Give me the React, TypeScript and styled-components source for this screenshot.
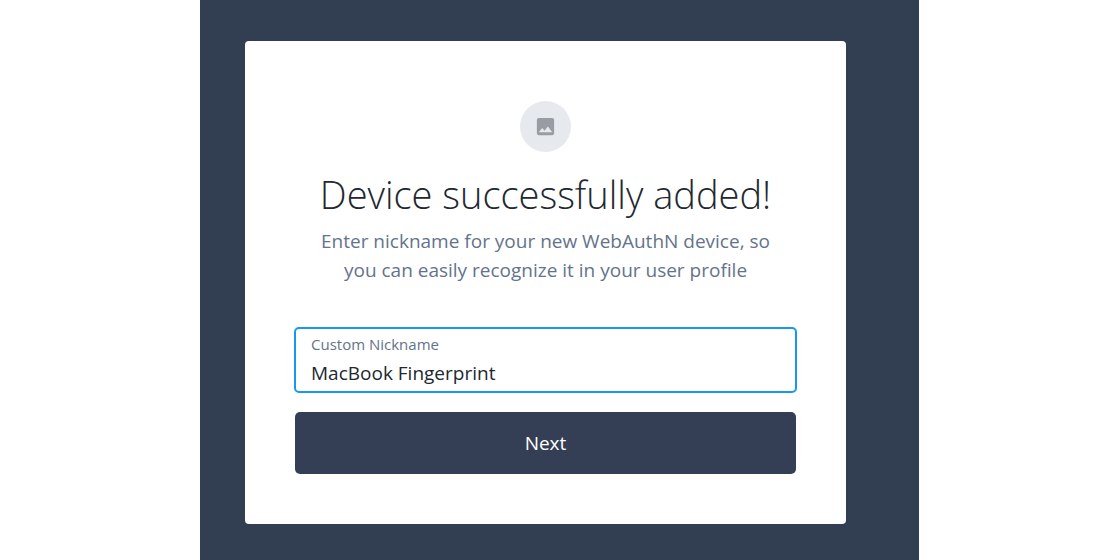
import React, { useState } from "react";
import styled, { createGlobalStyle } from "styled-components";

const GlobalStyle = createGlobalStyle`
  *, *::before, *::after { box-sizing: border-box; }
  body {
    margin: 0;
    background: #ffffff;
    font-family: "Open Sans", "Noto Sans", sans-serif;
  }
`;

const Page = styled.div`
  display: flex;
  justify-content: center;
  min-height: 100vh;
  padding-right: 1px;
`;

const Backdrop = styled.main`
  display: flex;
  align-items: flex-start;
  width: 100%;
  max-width: 719px;
  padding: 41px 73px 36px 45px;
  background: #323e52;
`;

const Card = styled.form`
  display: flex;
  flex: 1;
  flex-direction: column;
  align-items: center;
  padding: 60px 50px 50px;
  border-radius: 4px;
  background: #ffffff;
`;

const Badge = styled.div`
  display: grid;
  place-items: center;
  width: 51px;
  height: 51px;
  border-radius: 50%;
  background: #e6eaef;
  color: #989ca3;
`;

const Title = styled.h1`
  margin: 16px 0 0;
  color: #232830;
  font-size: 38px;
  font-weight: 300;
  line-height: 52px;
  text-align: center;
`;

const Description = styled.p`
  max-width: 460px;
  margin: 7px 0 43px;
  color: #64738c;
  font-size: 19px;
  line-height: 29px;
  text-align: center;
`;

const Field = styled.label`
  display: flex;
  flex-direction: column;
  width: 100%;
  padding: 6px 16px 0;
  border-radius: 4px;
  outline: 2px solid #1698f0;
  outline-offset: -1px;
`;

const FieldLabel = styled.span`
  color: #64738c;
  font-size: 15px;
  line-height: 20px;
`;

const FieldInput = styled.input`
  width: 100%;
  height: 38px;
  padding: 0;
  border: 0;
  outline: 0;
  background: transparent;
  color: #22272e;
  font-family: inherit;
  font-size: 19px;
`;

const SubmitButton = styled.button`
  width: 100%;
  height: 62px;
  margin-top: 20px;
  border: 0;
  border-radius: 5px;
  background: #343f55;
  color: #ffffff;
  font-family: inherit;
  font-size: 19px;
  font-weight: 500;
  cursor: pointer;
`;

const ImageIcon = () => (
  <svg width="23" height="23" viewBox="0 0 24 24" fill="currentColor" aria-hidden="true">
    <path d="M21 19V5c0-1.100-.9-2-2-2H5c-1.100 0-2 .9-2 2v14c0 1.100.9 2 2 2h14c1.100 0 2-.9 2-2zM8.500 13.500l2.500 3.010L14.500 12l4.500 6H5l3.500-4.500z" />
  </svg>
);

export default function App() {
  const [nickname, setNickname] = useState("MacBook Fingerprint");
  return (
    <>
      <GlobalStyle />
      <Page>
        <Backdrop>
          <Card onSubmit={(event) => event.preventDefault()}>
            <Badge>
              <ImageIcon />
            </Badge>
            <Title>Device successfully added!</Title>
            <Description>
              Enter nickname for your new WebAuthN device, so you can easily recognize it in your user profile
            </Description>
            <Field>
              <FieldLabel>Custom Nickname</FieldLabel>
              <FieldInput value={nickname} onChange={(event) => setNickname(event.target.value)} />
            </Field>
            <SubmitButton type="submit">Next</SubmitButton>
          </Card>
        </Backdrop>
      </Page>
    </>
  );
}
